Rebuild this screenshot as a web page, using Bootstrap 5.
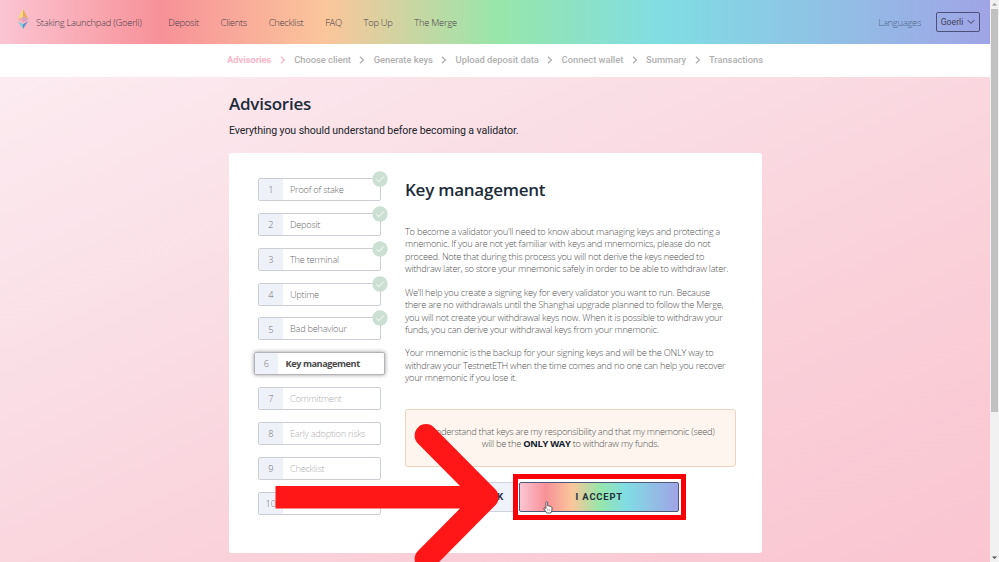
<!DOCTYPE html>
<html lang="en">
<head>
<meta charset="utf-8">
<meta name="viewport" content="width=device-width, initial-scale=1">
<title>Staking Launchpad (Goerli)</title>
<link href="https://cdn.jsdelivr.net/npm/bootstrap@5.3.0/dist/css/bootstrap.min.css" rel="stylesheet">
<style>
:root { --rainbow: linear-gradient(90deg, #fbc5d3 0%, #f79198 16.2%, #fac69b 33%, #97e6aa 50.5%, #80dde4 67%, #a0a4e6 100%); }
body { width: 999px; height: 562px; overflow: hidden; font: 300 9.3px/12.45px "Open Sans", "Noto Sans", sans-serif; letter-spacing: -.28px; color: #555; background: #f1f1f1; }
.page-area { width: 990px; height: 562px; overflow: hidden; background: linear-gradient(155deg, #fceff3 0%, #fadde5 40%, #fad0d9 68%, #f9c5d1 100%); }
.top-nav { height: 43.5px; padding: 2px 10px 0 17px; background: var(--rainbow); font-size: 9.4px; letter-spacing: -.27px; color: #4a4048; }
.brand-link { width: 151.3px; gap: 7px; }
.brand-link svg { margin-top: -7px; }
.menu-links { gap: 21.7px; }
.lang-link { color: #4b6288; }
.net-btn { width: 44px; height: 20px; border: 1px solid #4b5078; border-radius: 2px; font: 400 8.7px/18px Roboto, sans-serif; letter-spacing: 0; color: #41405a; margin: -2px 0 0 15px; }
.step-bar { height: 33.5px; padding: 0 227px; background: #fff; font: 500 9.4px/12px Roboto, sans-serif; letter-spacing: -.035px; color: #b0b0b0; }
.step-bar .now { color: #f9b6c8; font-weight: 700; }
.main-col { width: 533px; margin-left: 229px; }
.page-title, .topic-title { font-weight: 600; font-size: 17px; line-height: 22px; letter-spacing: -.24px; color: #1c2b3a; }
.page-title { padding-top: 16px; }
.intro { font: 400 10.6px/14px Roboto, sans-serif; letter-spacing: -.092px; color: #212529; padding-top: 9px; }
.panel { margin-top: 15px; height: 399.5px; border-radius: 3px; background: #fff; padding: 25px 26px 0 29px; }
.topics { width: 122.5px; gap: 11.85px; }
.topic { height: 23px; border: 1px solid #ccced6; border-radius: 2px; background: #fff; font-size: 9.2px; letter-spacing: -.25px; color: #6c6c6c; }
.topic .num { width: 23.5px; height: 100%; background: #eff1f8; color: #70727a; padding-top: 2px; letter-spacing: 0; }
.topic .txt { padding: 1.6px 0 0 7.5px; }
.topic.later .txt { color: #b0b0b0; }
.topic.active-topic { margin: 0 -4.5px; border-color: #b4b4b8; box-shadow: 0 0 4px rgba(0,0,0,.4); }
.topic.active-topic .txt { color: #484848; font-weight: 700; letter-spacing: -.44px; }
.tick { right: -8px; top: -8px; width: 16px; height: 16px; }
.content-col { width: 331px; }
.topic-title { padding-top: 1px; margin-bottom: 25px; }
.content-col p { margin: 0 0 10.9px; }
.notice { height: 58px; border: 1px solid #ead5c0; border-radius: 3px; background: #fef6ee; margin-top: 24.2px; padding-top: 1px; }
.notice b { font-weight: 700; color: #10202c; }
.actions { margin-top: 15px; padding-left: 57px; }
.act { height: 30px; border-radius: 2px; font: 700 9.4px/28px Roboto, sans-serif; letter-spacing: .85px; color: #22313c; }
.back-act { width: 54px; background: #f0f2fa; border: 1px solid #d0d2dc; padding-right: 11px; }
.accept-act { width: 160px; margin-left: 3.3px; background: var(--rainbow); border: 1px solid #4f5878; }
.frame-mark { left: 513px; top: 474px; width: 173px; height: 46px; border: 5px solid #f90007; }
.hand-pointer { left: 543px; top: 500px; }
.scroll-track { width: 9px; height: 562px; padding: 0 1px; background: #f1f1f1; }
.scroll-thumb { width: 7px; height: 403px; background: #c1c1c1; }
.over { left: 0; top: 0; }
</style>
<script src="https://cdn.jsdelivr.net/npm/bootstrap@5.3.0/dist/js/bootstrap.bundle.min.js"></script>
</head>
<body>
<svg class="d-none"><symbol id="sep" viewBox="0 0 6 8"><path d="M1 .8 4.400 4 1 7.200" fill="none" stroke="currentColor" stroke-width="1.300"/></symbol>
<symbol id="tick" viewBox="0 0 16 16"><circle cx="8" cy="8" r="7.700" fill="#cbe0d3"/><path d="m4.400 8.300 2.400 2.400 5-5.200" fill="none" stroke="#fff" stroke-width="1"/></symbol></svg>
<div class="d-flex position-relative">
<div class="page-area">
  <header class="top-nav d-flex align-items-center">
    <div class="brand-link d-flex align-items-center text-nowrap">
      <svg width="12" height="22" viewBox="0 0 12 22"><path d="M6 1 .6 11.2 6 8.8z" fill="#f5dc79"/><path d="M6 1v7.8l5.4 2.4z" fill="#e5a963"/><path d="M.6 11.2 6 8.8v6z" fill="#f3a9b1"/><path d="M6 8.8l5.4 2.4L6 14.8z" fill="#d5a2c5"/><path d="M.8 13 6 16.2V21z" fill="#75cddd"/><path d="M11.2 13 6 16.2V21z" fill="#628fc9"/></svg>
      <span>Staking Launchpad (Goerli)</span>
    </div>
    <nav class="menu-links d-flex text-nowrap"><span>Deposit</span><span>Clients</span><span>Checklist</span><span>FAQ</span><span>Top Up</span><span>The Merge</span></nav>
    <span class="lang-link ms-auto">Languages</span>
    <div class="net-btn d-flex align-items-center justify-content-center gap-1"><span>Goerli</span><svg width="8" height="6" viewBox="0 0 8 6"><path d="M.8 1.2 4 4.4 7.2 1.2" fill="none" stroke="currentColor"/></svg></div>
  </header>
  <div class="step-bar d-flex align-items-center justify-content-between text-nowrap">
    <span class="now">Advisories</span><svg class="now" width="6" height="8"><use href="#sep"/></svg>
    <span>Choose client</span><svg width="6" height="8"><use href="#sep"/></svg>
    <span>Generate keys</span><svg width="6" height="8"><use href="#sep"/></svg>
    <span>Upload deposit data</span><svg width="6" height="8"><use href="#sep"/></svg>
    <span>Connect wallet</span><svg width="6" height="8"><use href="#sep"/></svg>
    <span>Summary</span><svg width="6" height="8"><use href="#sep"/></svg>
    <span>Transactions</span>
  </div>
  <main class="main-col">
    <h1 class="page-title m-0">Advisories</h1>
    <div class="intro">Everything you should understand before becoming a validator.</div>
    <section class="panel d-flex justify-content-between">
      <div class="topics d-flex flex-column">
        <div class="topic d-flex align-items-center position-relative"><span class="num d-flex align-items-center justify-content-center">1</span><span class="txt">Proof of stake</span><svg class="tick position-absolute"><use href="#tick"/></svg></div>
        <div class="topic d-flex align-items-center position-relative"><span class="num d-flex align-items-center justify-content-center">2</span><span class="txt">Deposit</span><svg class="tick position-absolute"><use href="#tick"/></svg></div>
        <div class="topic d-flex align-items-center position-relative"><span class="num d-flex align-items-center justify-content-center">3</span><span class="txt">The terminal</span><svg class="tick position-absolute"><use href="#tick"/></svg></div>
        <div class="topic d-flex align-items-center position-relative"><span class="num d-flex align-items-center justify-content-center">4</span><span class="txt">Uptime</span><svg class="tick position-absolute"><use href="#tick"/></svg></div>
        <div class="topic d-flex align-items-center position-relative"><span class="num d-flex align-items-center justify-content-center">5</span><span class="txt">Bad behaviour</span><svg class="tick position-absolute"><use href="#tick"/></svg></div>
        <div class="topic active-topic d-flex align-items-center"><span class="num d-flex align-items-center justify-content-center">6</span><span class="txt">Key management</span></div>
        <div class="topic later d-flex align-items-center"><span class="num d-flex align-items-center justify-content-center">7</span><span class="txt">Commitment</span></div>
        <div class="topic later d-flex align-items-center"><span class="num d-flex align-items-center justify-content-center">8</span><span class="txt">Early adoption risks</span></div>
        <div class="topic later d-flex align-items-center"><span class="num d-flex align-items-center justify-content-center">9</span><span class="txt">Checklist</span></div>
        <div class="topic later d-flex align-items-center"><span class="num d-flex align-items-center justify-content-center">10</span></div>
      </div>
      <div class="content-col text-nowrap">
        <h2 class="topic-title">Key management</h2>
        <p>To become a validator you'll need to know about managing keys and protecting a<br>mnemonic. If you are not yet familiar with keys and mnemomics, please do not<br>proceed. Note that during this process you will not derive the keys needed to<br>withdraw later, so store your mnemonic safely in order to be able to withdraw later.</p>
        <p>We'll help you create a signing key for every validator you want to run. Because<br>there are no withdrawals until the Shanghai upgrade planned to follow the Merge,<br>you will not create your withdrawal keys now. When it is possible to withdraw your<br>funds, you can derive your withdrawal keys from your mnemonic.</p>
        <p>Your mnemonic is the backup for your signing keys and will be the ONLY way to<br>withdraw your TestnetETH when the time comes and no one can help you recover<br>your mnemonic if you lose it.</p>
        <div class="notice d-flex align-items-center justify-content-center text-center"><div>I understand that keys are my responsibility and that my mnemonic (seed)<br>will be the <b>ONLY WAY</b> to withdraw my funds.</div></div>
        <div class="actions d-flex"><div class="act back-act text-end">BACK</div><div class="act accept-act text-center">I ACCEPT</div></div>
      </div>
    </section>
  </main>
</div>
<div class="scroll-track d-flex flex-column align-items-center">
  <svg width="7" height="9" viewBox="0 0 7 9"><path d="M1 5.5h5L3.500 3z" fill="#999"/></svg>
  <div class="scroll-thumb"></div>
  <svg class="mt-auto" width="7" height="9" viewBox="0 0 7 9"><path d="M1 3.500h5L3.500 6z" fill="#505050"/></svg>
</div>
<svg class="over position-absolute" width="999" height="562" viewBox="0 0 999 562">
  <path d="M275.500 497.200H480" fill="none" stroke="#ff1616" stroke-width="22.500"/>
  <path d="M426 435.500 487.200 497.200 426 559" fill="none" stroke="#ff1616" stroke-width="22.800" stroke-linecap="round" stroke-linejoin="round"/>
</svg>
<div class="frame-mark position-absolute"></div>
<svg class="hand-pointer position-absolute" width="10" height="14" viewBox="0 0 10 14"><path d="M3 8.500V2.100Q3.900.8 4.600 2.100V5.700L7.800 6.500Q9.200 7 9.100 8.200L8.700 10.600 7.900 13H3.800L1 9Q.6 7.700 1.600 7.700z" fill="#fff" stroke="#444" stroke-width=".8"/><path d="M4.700 8.500v2.600M6.200 8.700v2.400" stroke="#777" stroke-width=".5"/></svg>
</div>
</body>
</html>
